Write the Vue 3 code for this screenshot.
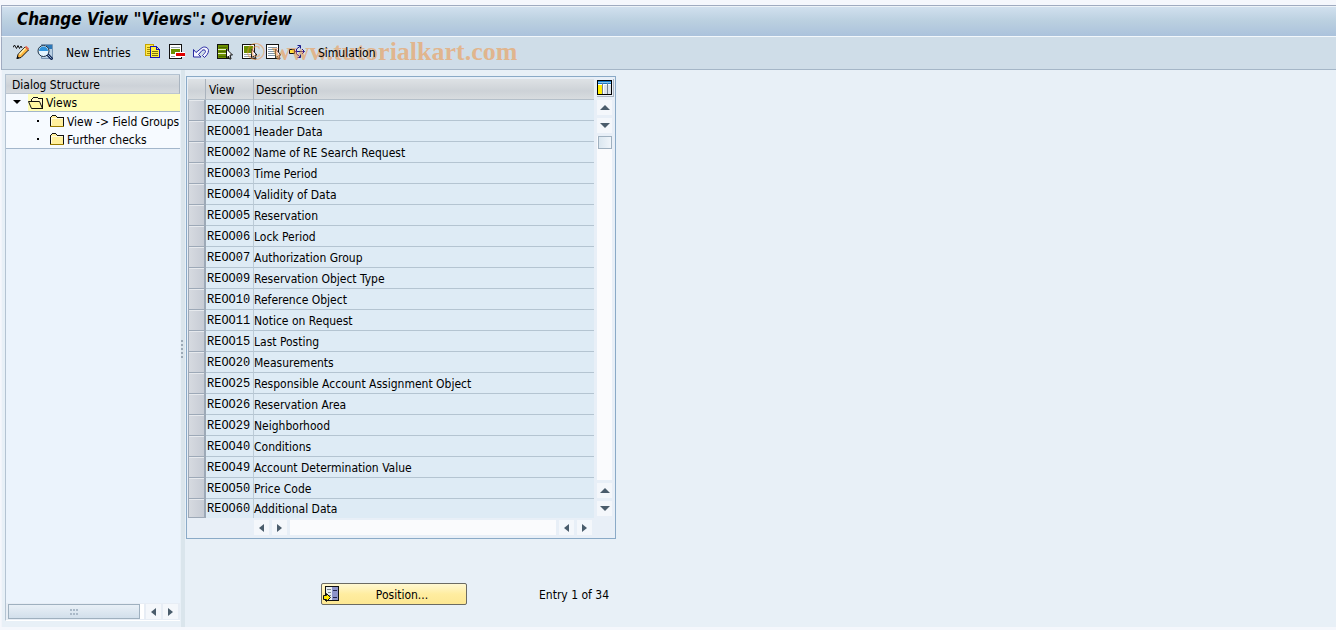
<script setup>
import { ref } from 'vue'

const rows = [
  ['REOO00', 'Initial Screen'],
  ['REOO01', 'Header Data'],
  ['REOO02', 'Name of RE Search Request'],
  ['REOO03', 'Time Period'],
  ['REOO04', 'Validity of Data'],
  ['REOO05', 'Reservation'],
  ['REOO06', 'Lock Period'],
  ['REOO07', 'Authorization Group'],
  ['REOO09', 'Reservation Object Type'],
  ['REOO10', 'Reference Object'],
  ['REOO11', 'Notice on Request'],
  ['REOO15', 'Last Posting'],
  ['REOO20', 'Measurements'],
  ['REOO25', 'Responsible Account Assignment Object'],
  ['REOO26', 'Reservation Area'],
  ['REOO29', 'Neighborhood'],
  ['REOO40', 'Conditions'],
  ['REOO49', 'Account Determination Value'],
  ['REOO50', 'Price Code'],
  ['REOO60', 'Additional Data'],
]
const selected = ref(-1)
</script>

<template>
  <div class="window">
    <header class="title-bar">
      <h1>Change View "Views": Overview</h1>
    </header>

    <div class="toolbar" role="toolbar" aria-label="Application toolbar">
      <button class="tool" type="button" aria-label="Display or change">
        <svg viewBox="0 0 16 16">
          <path d="M0 3.500 1.500 1l2 3.500L5 1.500l1.500 3L8 2l1 2" fill="none" stroke="#111" stroke-width="1" />
          <path d="m4 14.500 1-4 7-7.500 3.500 3-7.500 7.500z" fill="#ffb63c" stroke="#111" />
          <path d="m6.500 10.500 6-6.500" stroke="#fff3b0" stroke-width="1.500" />
          <path d="m12.500 2.500 3 3" stroke="#e66a4e" stroke-width="2" />
          <path d="m3.500 15 1-3 2 2z" fill="#111" />
        </svg>
      </button>
      <button class="tool" type="button" aria-label="Find details">
        <svg viewBox="0 0 16 16">
          <path d="M4.500.5h11v14H4.500z" fill="#b9d0e4" stroke="#7895b3" />
          <path d="M9 1h6v4H9z" fill="#2c78b8" />
          <circle cx="6.500" cy="7" r="5.500" fill="#e3f5ff" stroke="#1b3044" />
          <path d="M2 7a4.500 4.500 0 0 1 9 0z" fill="#2f93dc" />
          <path d="m10.500 10.500 5 5" stroke="#142a55" stroke-width="3" />
          <path d="m10.500 10.500 4 4" stroke="#8fb1dc" stroke-width="1" />
        </svg>
      </button>
      <button class="text-tool entries" type="button">New Entries</button>
      <button class="tool" type="button" aria-label="Copy as">
        <svg viewBox="0 0 16 16" shape-rendering="crispEdges">
          <path d="M.5.5h8v11h-8z" fill="#ffe94d" stroke="#c7a400" />
          <path d="M2 3.500h4M2 5.500h4M2 7.500h4M2 9.500h3" stroke="#a78b00" />
          <path d="M5.500 2.500h6l3 3v8h-9z" fill="#ffef3c" stroke="#1616b8" />
          <path d="M11.500 2.500v3h3" fill="none" stroke="#1616b8" />
          <path d="M7 7.500h6M7 9.500h6M7 11.500h6" stroke="#7a7410" />
        </svg>
      </button>
      <button class="tool" type="button" aria-label="Delete">
        <svg viewBox="0 0 16 16" shape-rendering="crispEdges">
          <path d="M.5.5h12v14H.5z" fill="#fff" stroke="#111" />
          <path d="M2 3.500h9M2 12.500h9" stroke="#9aa5ad" />
          <path d="M2 5h9v5H2z" fill="#6b8e00" />
          <path d="M6 8h10v5H6z" fill="#fff" />
          <path d="M7 9h9v3H7z" fill="#e00000" />
        </svg>
      </button>
      <button class="tool" type="button" aria-label="Undo change">
        <svg viewBox="0 0 16 16">
          <path d="M.5 5.500v7.500H8L5.500 10.500l3.500-4c1-1 3.500-1 3.500 1 0 1-2 3-3 4l2 2c2-2 4-4 4-7s-4.500-5-7.500-2L3 8.500z" fill="#f3f5ff" stroke="#2929a3" />
        </svg>
      </button>
      <button class="tool" type="button" aria-label="Select all">
        <svg viewBox="0 0 16 16" shape-rendering="crispEdges">
          <path d="M.5.5h11v14H.5z" fill="#6b8e00" stroke="#111" />
          <path d="M1 5.500h10M1 9.500h10" stroke="#e7f0c4" />
          <path d="M2 3.500h8M2 7.500h8M2 12.500h8" stroke="#4a6800" />
          <path d="M9.500 5v9l2-2 1 3h1.500l-1-4h2.500z" fill="#fff" stroke="#111" shape-rendering="auto" />
        </svg>
      </button>
      <button class="tool" type="button" aria-label="Select block">
        <svg viewBox="0 0 16 16" shape-rendering="crispEdges">
          <path d="M1.500.5h12v14h-12z" fill="#fff" stroke="#111" />
          <path d="M3 2h9v7H3z" fill="#6b8e00" />
          <path d="M3 10.500h9M3 12.500h9" stroke="#9aa5ad" />
          <path d="M10.500 5v9l2-2 1 3H15l-1-4h2z" fill="#fff" stroke="#111" shape-rendering="auto" />
        </svg>
      </button>
      <button class="tool" type="button" aria-label="Deselect all">
        <svg viewBox="0 0 16 16" shape-rendering="crispEdges">
          <path d="M1.500.5h12v14h-12z" fill="#fff" stroke="#111" />
          <path d="M3 3.500h9M3 5.500h9M3 7.500h9M3 9.500h9M3 11.500h9" stroke="#8295a5" />
          <path d="M10.500 5v9l2-2 1 3H15l-1-4h2z" fill="#fff" stroke="#333" shape-rendering="auto" />
        </svg>
      </button>
      <button class="tool" type="button" aria-label="Branch">
        <svg viewBox="0 0 16 16">
          <path d="M5 7.500h10M7.500 7.500V5l4-3M7.500 7.500V10l4 3M13 5l2.500 2.500L13 10M8.500 1.500h3v3M8.500 13.500h3v-3" fill="none" stroke="#15158a" />
          <path d="M.5 5.500h5v4h-5z" fill="#ffe23c" stroke="#111" />
        </svg>
      </button>
      <button class="text-tool simulation" type="button">Simulation</button>
      <span class="watermark">© www.tutorialkart.com</span>
    </div>

    <main class="workspace">
      <aside class="structure">
        <h2>Dialog Structure</h2>
        <ul class="tree">
          <li class="node root">
            <span class="arrow down"></span>
            <a href="#views">
              <svg class="folder" viewBox="0 0 16 14" shape-rendering="crispEdges">
                <path d="M3.500 6V3.500l2-2h4l1 1h4v9" fill="#fff8c8" stroke="#111" />
                <path d="M.5 5.500h11l3 7h-11z" fill="#fff7a0" stroke="#111" shape-rendering="auto" />
                <path d="M14.500 3v10" stroke="#111" />
              </svg>
              <span>Views</span>
            </a>
          </li>
          <li class="node child">
            <span class="bullet"></span>
            <a href="#field-groups">
              <svg class="folder" viewBox="0 0 16 14" shape-rendering="crispEdges">
                <path d="M1.500 12.500v-9l2-2h3l2 2h6v9z" fill="#ffef9c" stroke="#111" />
                <path d="M2.500 11V4.500h11" fill="none" stroke="#fffbe0" />
                <path d="M1 12.500h14" stroke="#9a7b00" />
              </svg>
              <span>View -&gt; Field Groups</span>
            </a>
          </li>
          <li class="node child">
            <span class="bullet"></span>
            <a href="#checks">
              <svg class="folder" viewBox="0 0 16 14" shape-rendering="crispEdges">
                <path d="M1.500 12.500v-9l2-2h3l2 2h6v9z" fill="#ffef9c" stroke="#111" />
                <path d="M2.500 11V4.500h11" fill="none" stroke="#fffbe0" />
                <path d="M1 12.500h14" stroke="#9a7b00" />
              </svg>
              <span>Further checks</span>
            </a>
          </li>
        </ul>
        <div class="tree-scroll">
          <div class="track"><span class="thumb"><i v-for="n in 6" :key="n"></i></span></div>
          <button class="step" type="button" aria-label="Scroll tree left"><span class="arrow left"></span></button>
          <button class="step" type="button" aria-label="Scroll tree right"><span class="arrow right"></span></button>
        </div>
      </aside>

      <div class="splitter"><i v-for="n in 5" :key="n"></i></div>

      <section class="content">
        <div class="grid-frame">
          <table>
            <colgroup><col class="c-sel" /><col class="c-view" /><col class="c-desc" /></colgroup>
            <thead>
              <tr><th class="sel"></th><th>View</th><th>Description</th></tr>
            </thead>
            <tbody>
              <tr v-for="(row, i) in rows" :key="row[0]">
                <td class="sel"><button type="button" :aria-label="'Select ' + row[0]" :aria-pressed="selected === i" @click="selected = i"></button></td>
                <td class="code">{{ row[0] }}</td>
                <td>{{ row[1] }}</td>
              </tr>
            </tbody>
          </table>

          <div class="v-scroll">
            <button class="config" type="button" aria-label="Configuration">
              <svg viewBox="0 0 15 15" shape-rendering="crispEdges">
                <path d="M0 0h15v15H0z" fill="#000" />
                <path d="M1 1h13v13H1z" fill="#fff" />
                <path d="M1 1h13v3H1z" fill="#167ac6" />
                <path d="M1 5h4v9H1z" fill="#ffec00" />
                <path d="M7 5h3v9H7zM11 5h3v9h-3z" fill="#dce3e9" />
                <path d="M5.500 2v12M10.500 2v12" stroke="#73818d" />
                <path d="M1 2.500h13" stroke="#83c5f1" />
              </svg>
            </button>
            <button class="step" type="button" aria-label="Scroll up"><span class="arrow up"></span></button>
            <button class="step" type="button" aria-label="Scroll down"><span class="arrow down"></span></button>
            <div class="v-track"><span class="v-thumb"></span></div>
            <button class="step" type="button" aria-label="Previous row"><span class="arrow up"></span></button>
            <button class="step" type="button" aria-label="Next row"><span class="arrow down"></span></button>
          </div>

          <div class="h-scroll">
            <button class="step" type="button" aria-label="Scroll left"><span class="arrow left"></span></button>
            <button class="step" type="button" aria-label="Scroll right"><span class="arrow right"></span></button>
            <div class="h-track"></div>
            <button class="step" type="button" aria-label="Previous column"><span class="arrow left"></span></button>
            <button class="step" type="button" aria-label="Next column"><span class="arrow right"></span></button>
          </div>
        </div>

        <div class="position-row">
          <button class="position" type="button">
            <svg viewBox="0 0 16 16" shape-rendering="crispEdges">
              <path d="M2.500.5h13v14h-13z" fill="#e5ecf2" stroke="#111" />
              <path d="M9 1h6v13H9z" fill="#8c93c9" />
              <path d="M4 3.500h4M5 6.500h3M4 9.500h4" stroke="#7a858d" />
              <path d="M10 4.500h4M10 11.500h4" stroke="#22264f" />
              <path d="M.5 9.500h3v-2l4 4-4 4v-2h-3z" fill="#ffe600" stroke="#111" shape-rendering="auto" />
            </svg>
            <span>Position...</span>
          </button>
          <span class="entry">Entry 1 of 34</span>
        </div>
      </section>
    </main>
  </div>
</template>

<style>
body {
  margin: 0;
  background: #f5f7fc;
}
</style>

<style scoped>
* {
  box-sizing: border-box;
}
.window {
  display: flex;
  flex-direction: column;
  min-height: 100vh;
  padding: 5px 0 3px 1px;
  font: 12px/18px "DejaVu Sans Condensed", "DejaVu Sans", sans-serif;
  color: #000;
}
button {
  margin: 0;
  padding: 0;
  border: 0;
  background: none;
  font: inherit;
  color: inherit;
}
svg {
  display: block;
  flex: none;
}
.title-bar {
  height: 32px;
  border: 1px solid #a0abc0;
  border-width: 1px 0 0 1px;
  border-bottom: 1px solid #f2f7fb;
  background: linear-gradient(#d2e1ef, #bbd0e0 50%, #abc2dc);
  box-shadow: inset 0 1px #edf3f8;
}
h1 {
  margin: 0;
  padding: 1px 15px;
  font: italic bold 17px/25px "DejaVu Sans Condensed", "DejaVu Sans", sans-serif;
}
.toolbar {
  position: relative;
  display: flex;
  align-items: center;
  gap: 8px;
  height: 33px;
  padding: 0 11px 2px;
  border-left: 1px solid #a0abc0;
  border-bottom: 1px solid #a5b6c7;
  background: #cfdde8;
}
.tool,
.tool svg {
  width: 16px;
  height: 16px;
}
.text-tool {
  padding-top: 1px;
  text-align: left;
  white-space: nowrap;
}
.entries {
  width: 72px;
  margin-right: 4px;
  padding-left: 5px;
}
.simulation {
  z-index: 1;
  margin-left: 5px;
}
.watermark {
  position: absolute;
  left: 244px;
  top: 0;
  font: bold 26px/30px "Liberation Serif", serif;
  color: rgba(240, 147, 64, 0.55);
  white-space: nowrap;
  pointer-events: none;
}
.workspace {
  flex: 1;
  display: flex;
  background: #e8f0f7;
  border-left: 1px solid #f2f4fa;
}
.structure {
  display: flex;
  flex-direction: column;
  width: 175px;
  margin: 4px 0 6px 3px;
  border: 1px solid #b4c3d2;
  border-width: 1px 0 0 1px;
  border-bottom: 1px solid #fff;
  background: #ebf3fc;
}
h2 {
  margin: 0;
  height: 19px;
  padding: 1px 0 0 6px;
  border-right: 1px solid #a9b4c0;
  border-bottom: 1px solid #bdc6d0;
  background: linear-gradient(#dbe0e4, #cdd2d8 60%, #d6dade);
  font: inherit;
}
.tree {
  margin: 0;
  padding: 0;
  list-style: none;
  background: #f6faff;
  border-bottom: 1px solid #a3b6cb;
}
.node {
  display: flex;
  align-items: center;
  height: 18px;
}
.node a {
  flex: 1;
  min-width: 0;
  display: flex;
  align-items: center;
  gap: 2px;
  overflow: hidden;
  color: inherit;
  text-decoration: none;
  white-space: nowrap;
}
.node a span {
  padding-top: 1px;
}
.root {
  border-bottom: 1px solid #a3b6cb;
}
.root .arrow {
  margin: 0 7px 2px;
}
.root a {
  height: 17px;
  background: #fffdb8;
}
.bullet {
  width: 2px;
  height: 2px;
  margin: 0 10px 0 31px;
  background: #000;
}
.folder {
  width: 16px;
  height: 14px;
}
.tree-scroll {
  display: flex;
  gap: 2px;
  margin-top: auto;
  height: 17px;
  padding: 1px 2px;
  background: #e7edf5;
}
.track {
  flex: 1;
  padding-right: 4px;
  background: #fff;
}
.thumb {
  display: grid;
  grid-template-columns: repeat(3, 2px);
  gap: 2px 1px;
  place-content: center;
  height: 15px;
  border: 1px solid #9fb0bf;
  background: linear-gradient(#e9f0f7, #d2dfeb);
}
.thumb i {
  height: 2px;
  background: #aab9c8;
}
.step {
  display: flex;
  align-items: center;
  justify-content: center;
  flex: none;
  width: 15px;
  height: 15px;
  background: #f4f7fb;
}
.arrow {
  flex: none;
  border: 0 solid transparent;
}
.arrow.up {
  border-width: 0 5px 5px;
  border-bottom-color: #4a5c6b;
}
.arrow.down {
  border-width: 5px 5px 0;
  border-top-color: #4a5c6b;
}
.arrow.left {
  border-width: 4px 5px 4px 0;
  border-right-color: #4a5c6b;
}
.arrow.right {
  border-width: 4px 0 4px 5px;
  border-left-color: #4a5c6b;
}
.root .arrow.down {
  border-width: 4px 4px 0;
  border-top-color: #000;
}
.splitter {
  display: flex;
  flex-direction: column;
  justify-content: center;
  gap: 2px;
  width: 4px;
  margin-left: 1px;
  background: #dae5ec;
}
.splitter i {
  width: 2px;
  height: 2px;
  background: #9ba9b6;
}
.content {
  flex: 1;
  min-width: 0;
  padding: 6px 1px 0;
}
.grid-frame {
  display: grid;
  grid-template-columns: 406px 17px;
  grid-template-rows: auto 15px;
  gap: 2px 3px;
  width: 430px;
  padding: 2px 1px 3px;
  border: 1px solid #8aaac7;
  background: #e8eff7;
}
table {
  width: 406px;
  table-layout: fixed;
  border-collapse: separate;
  border-spacing: 0;
  background: #deebf5;
}
.c-sel {
  width: 18px;
}
.c-view {
  width: 48px;
}
th {
  height: 21px;
  padding: 1px 2px 0 3px;
  border-bottom: 1px solid #b4bfc9;
  border-right: 1px solid #aab3bd;
  background: linear-gradient(#dee2e5, #cdd2d7 60%, #d8dcdf);
  font-weight: normal;
  text-align: left;
}
th:last-child {
  padding-left: 2px;
  border-right: 0;
}
td {
  height: 21px;
  padding: 2px 0 0;
  border-right: 1px solid #bccbd7;
  border-bottom: 1px solid #b4c4d1;
  white-space: nowrap;
}
td:last-child {
  border-right: 0;
}
tr:last-child td {
  height: 19px;
  padding-top: 0;
  border-bottom: 0;
}
td.code {
  padding-left: 1px;
  font: 12px/18px "Liberation Mono", monospace;
}
td.sel {
  border: 0;
  padding: 0;
}
td.sel button {
  display: block;
  width: 18px;
  height: 21px;
  border: 1px solid #9da9b7;
  border-width: 0 2px 1px 1px;
  background: linear-gradient(90deg, #d6dae0, #c7ccd5);
  box-shadow: inset 0 1px #e6e9ed;
}
tr:last-child td.sel button {
  height: 19px;
}
td.sel button[aria-pressed="true"] {
  background: #ffe08a;
}
.v-scroll {
  display: flex;
  flex-direction: column;
  gap: 3px;
  min-height: 0;
  padding-bottom: 2px;
}
.config {
  width: 17px;
  height: 18px;
  padding-bottom: 1px;
  border-bottom: 1px solid #a9b4c0;
  border-right: 1px solid #a9b4c0;
}
.config svg {
  width: 15px;
  height: 15px;
}
.v-track {
  flex: 1;
  width: 15px;
  padding-left: 1px;
  background: #fafbfd;
}
.v-thumb {
  display: block;
  height: 13px;
  border: 1px solid #9fb0bf;
  background: linear-gradient(90deg, #dbe7f0, #f0f5fa);
}
.h-scroll {
  display: flex;
  gap: 3px;
  margin-left: 66px;
  padding-right: 2px;
}
.h-track {
  flex: 1;
  background: #fafbfd;
}
.position-row {
  display: flex;
  align-items: center;
  gap: 72px;
  margin: 44px 0 0 135px;
}
.position {
  display: flex;
  align-items: center;
  width: 146px;
  height: 22px;
  padding: 0 1px;
  border: 1px solid #6b6b63;
  border-radius: 2px;
  background: linear-gradient(#fff8d2, #ffeda0 50%, #fde893);
}
.position svg {
  width: 16px;
  height: 16px;
}
.position span {
  flex: 1;
  padding-top: 1px;
  text-align: center;
}
.entry {
  padding-top: 2px;
  white-space: nowrap;
}
</style>
